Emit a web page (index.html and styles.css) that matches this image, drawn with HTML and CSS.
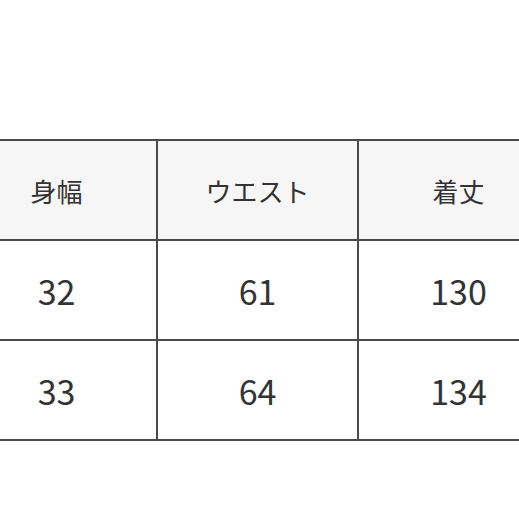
FILE: index.html
```html
<!DOCTYPE html>
<html lang="ja">
<head>
<meta charset="utf-8">
<link rel="stylesheet" href="styles.css">
</head>
<body>
<div class="page">
  <table class="size-table">
    <thead>
      <tr>
        <th>身幅</th>
        <th>ウエスト</th>
        <th>着丈</th>
      </tr>
    </thead>
    <tbody>
      <tr>
        <td>32</td>
        <td>61</td>
        <td>130</td>
      </tr>
      <tr>
        <td>33</td>
        <td>64</td>
        <td>134</td>
      </tr>
    </tbody>
  </table>
</div>
</body>
</html>
```
FILE: styles.css
```css
html, body {
  margin: 0;
  padding: 0;
  background: #ffffff;
  overflow: hidden;
}
.page {
  width: 519px;
  height: 519px;
  overflow: hidden;
  padding-top: 139px;
  box-sizing: border-box;
}
.size-table {
  border-collapse: collapse;
  margin-left: -45px;
  table-layout: fixed;
  width: 603px;
  font-family: "Noto Sans CJK JP", "Noto Sans", sans-serif;
  color: #333333;
}
.size-table th,
.size-table td {
  border: 2px solid #4a4a4a;
  width: 201px;
  height: 100px;
  padding: 0;
  text-align: center;
  vertical-align: middle;
  box-sizing: border-box;
}
.size-table th {
  background: #f6f6f6;
  font-weight: normal;
  font-size: 26px;
}
.size-table td {
  font-size: 34px;
  background: #ffffff;
}
```
